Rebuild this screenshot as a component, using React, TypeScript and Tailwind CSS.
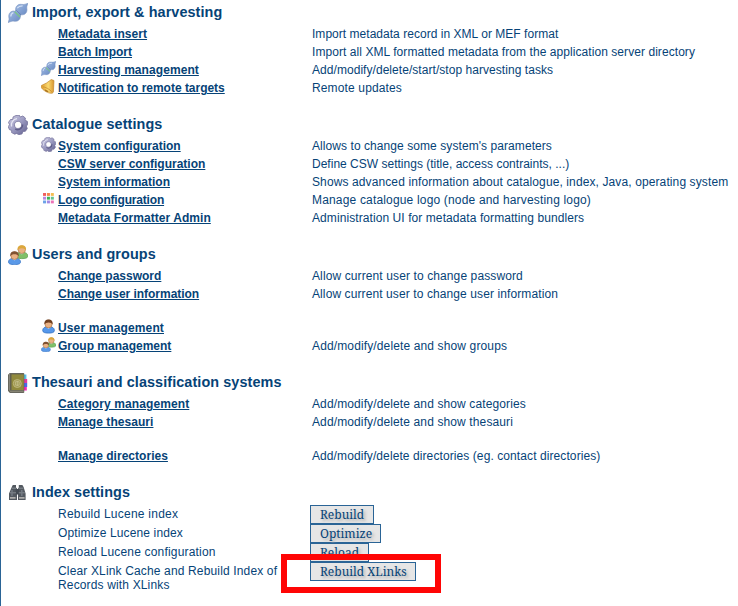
import React from "react";

type IconName = "plug" | "bell" | "gear" | "grid" | "users" | "user" | "book" | "binoculars";

function Person({ hair, shirt, edge }: { hair: string; shirt: string; edge: string }) {
  return (
    <g>
      <path d="M0.5 11C0.5 8.5 2.7 7.2 6.5 7.2S12.5 8.5 12.5 11C12.5 13 10 13.6 6.5 13.6S.5 13 .5 11Z" fill={shirt} stroke={edge} strokeWidth=".8" />
      <path d="M4.6 8 6.5 9.6 8.4 8Z" fill="#c8dcf5" />
      <ellipse cx="6.5" cy="4.7" rx="3.7" ry="3.8" fill="#e9b184" stroke="#a8713f" strokeWidth=".6" />
      <path d="M2.3 5.2C1.8 2 3.6.2 6.5.2S11.2 2 10.7 5.2C9.8 3.9 8.6 3.2 6.5 3.2S3.2 3.9 2.3 5.2Z" fill={hair} />
    </g>
  );
}

function Icon({ name, size }: { name: IconName; size: number }) {
  const id = React.useId();
  const fill = `url(#${id})`;
  return (
    <svg width={size} height={size} viewBox="0 0 20 20" className="block shrink-0">
      {name === "plug" && (
        <g>
          <defs>
            <linearGradient id={id} x1="0" y1="0" x2="1" y2="1">
              <stop offset="0" stopColor="#b9cdec" />
              <stop offset=".5" stopColor="#84a2d3" />
              <stop offset="1" stopColor="#5b7cb6" />
            </linearGradient>
          </defs>
          <path d="M.2 19.6C.3 18 1.4 17.2 1 15.2.2 11.4 1.6 8.6 5.4 8L7 8.6 7.6 6.6C7.6 3 10.2.9 13.8 1.4 16.2 1.7 17.8 1.2 19.8.2 19.8 2 18.4 3 18.8 5.2 19.5 8.6 17.8 11.4 14.6 11.8L13 11.4 12.4 13.4C12.2 16.8 9.6 18.8 6.2 18.2 4 17.8 2.2 18.7.2 19.6Z" fill={fill} stroke="#7590c0" strokeWidth=".6" />
          <path d="M6.8 8.8 12 14" stroke="#7cc486" strokeWidth="1.4" />
          <path d="M8.2 7.2 13.2 12" stroke="#56749f" strokeWidth=".6" />
          <path d="M9.2 5.2Q11 2.8 14.6 2.9M2.8 13.4Q2.8 10.6 5.4 9.6" fill="none" stroke="#d2e0f5" strokeWidth="1.2" />
        </g>
      )}
      {name === "bell" && (
        <g>
          <defs>
            <linearGradient id={id}>
              <stop offset="0" stopColor="#dc9a2c" />
              <stop offset=".55" stopColor="#fad970" />
              <stop offset="1" stopColor="#d8942f" />
            </linearGradient>
          </defs>
          <path d="M13.6.8 17.3 2 17 7.8 16.6 17C15.6 20.2 11.5 19.4 6.6 16.8 2 14.2-.8 11.3.6 8.6L7.6 5.2 11.4 2.4Z" fill={fill} stroke="#c18529" strokeWidth=".9" />
          <path d="M2.4 10.4C5 10.4 12.6 14 14.2 17" fill="none" stroke="#c58a2c" strokeWidth="1" />
          <path d="M4.8 13.6C5.2 17 9.3 18.3 10.2 16.2Z" fill="#a86f1c" />
        </g>
      )}
      {name === "gear" && (
        <g>
          <defs>
            <linearGradient id={id} x1="0" y1="0" x2="1" y2="1">
              <stop offset="0" stopColor="#cfcee4" />
              <stop offset=".5" stopColor="#9c9bc2" />
              <stop offset="1" stopColor="#5e5d8b" />
            </linearGradient>
          </defs>
          <path fillRule="evenodd" d="M8 .5 11.3.2 12.3 2 14.8 1 17.4 3 17 5.2 19.3 6.3 19.8 9.5 18.3 11 19.3 13.5 17.4 16.3 15 16.4 14 18.9 10.5 19.7 8.8 18.4 6.7 19.2 3.6 17.6 3.7 15.4 1.4 14.6.2 11.5 1.6 9.8.5 7.4 2.5 4.5 4.7 4.5 5.1 1.9ZM8.8 6.5C6.8 7.2 6 9.2 6.7 11.2S9.4 14 11.4 13.2 14.1 10.5 13.4 8.6 10.7 5.9 8.8 6.5Z" fill={fill} stroke="#73719b" strokeWidth=".8" />
          <path d="M3.6 11.5C2.7 7.5 5 4.3 9 3.6" fill="none" stroke="#e6e6f4" strokeWidth="1.3" />
          <path d="M7.3 13.9C9.7 16 14.6 13.9 14.7 9.5" fill="none" stroke="#5e5d89" strokeWidth="1.4" />
        </g>
      )}
      {name === "grid" && (
        <g>
          {["#f05c5c", "#f5834b", "#f6bd50", "#b886df", "#38b457", "#67c18c", "#6ca3e8", "#a389e4", "#ed72b7"].map((color, i) => (
            <rect key={i} x={2.7 + (i % 3) * 5.2} y={2.7 + Math.floor(i / 3) * 5} width="4" height="3.8" fill={color} />
          ))}
        </g>
      )}
      {name === "users" && (
        <g>
          <g transform="translate(7.3 0)"><Person hair="#dca83c" shirt="#80bf69" edge="#5a9f50" /></g>
          <g transform="translate(0 6)"><Person hair="#805232" shirt="#5a99e8" edge="#3a77c8" /></g>
        </g>
      )}
      {name === "user" && (
        <g transform="translate(1.6 .3) scale(1.3 1.36)"><Person hair="#714020" shirt="#5698eb" edge="#3472c2" /></g>
      )}
      {name === "book" && (
        <g>
          <path d="M15 1.5H18.4V6H15Z" fill="#55bce6" />
          <path d="M15 6H19.2V10H15Z" fill="#e03c9e" />
          <path d="M15 10H19.2V14H15Z" fill="#4b68e5" />
          <path d="M15 14H18.8V17.5H15Z" fill="#f22ab4" />
          <path d="M1.8.5H15.8V19.5H2L.4 18V1.8Z" fill="#626050" stroke="#56544a" strokeWidth=".8" />
          <path d="M3.5 1.4H15.8V17H3.5Z" fill="#918a3d" />
          <path d="M1.5 1V17.7" stroke="#85847a" strokeWidth="1" />
          <path d="M2 18.2H15.5" stroke="#a5a392" strokeWidth=".8" />
          <circle cx="9.3" cy="10.5" r="4" fill="#a29b55" stroke="#c2bb80" strokeWidth=".9" />
          <path d="M7.6 8.7h3.5v3.5H7.6ZM9.3 7.8V13" fill="none" stroke="#cbc595" strokeWidth=".7" />
        </g>
      )}
      {name === "binoculars" && (
        <g>
          <path d="M4 3.5 4.8 2H8V4.5L9 5.5V17H1V10.5ZM10.8 2H14.4L15.6 4 17.6 10.5V17H10V5.5L10.8 4.5Z" fill="#535960" />
          <path d="M7.7 6H11.2V11.5H7.7Z" fill="#454c54" />
          <path d="M3.8 5.2H8M10.8 5.2H15.4M2 9.8H8M10.8 9.8H16.8" stroke="#858b91" strokeWidth="1" />
          <path d="M2 14.8H7.6M11 14.8H16.6" stroke="#aeadab" strokeWidth="1.8" />
          <path d="M4 7V13M13.8 7V13" stroke="#767d85" strokeWidth="1.4" />
        </g>
      )}
    </svg>
  );
}

interface Entry { label: string; text?: string; icon?: IconName; spaced?: boolean; labelTracking?: string; tracking?: string }
interface Group { title: string; icon: IconName; entries: Entry[] }

const groups: Group[] = [
  { title: "Import, export & harvesting", icon: "plug", entries: [
    { label: "Metadata insert", labelTracking: "tracking-[0.07px]", text: "Import metadata record in XML or MEF format", tracking: "tracking-[0.03px]" },
    { label: "Batch Import", text: "Import all XML formatted metadata from the application server directory", tracking: "tracking-[0.065px]" },
    { label: "Harvesting management", labelTracking: "tracking-[0.07px]", text: "Add/modify/delete/start/stop harvesting tasks", tracking: "tracking-[0.05px]", icon: "plug" },
    { label: "Notification to remote targets", labelTracking: "tracking-[-0.02px]", text: "Remote updates", tracking: "tracking-[0.14px]", icon: "bell" },
  ] },
  { title: "Catalogue settings", icon: "gear", entries: [
    { label: "System configuration", text: "Allows to change some system's parameters", tracking: "tracking-[0.07px]", icon: "gear" },
    { label: "CSW server configuration", text: "Define CSW settings (title, access contraints, ...)", tracking: "tracking-[0.01px]" },
    { label: "System information", text: "Shows advanced information about catalogue, index, Java, operating system", tracking: "tracking-[0.11px]" },
    { label: "Logo configuration", labelTracking: "tracking-[-0.18px]", text: "Manage catalogue logo (node and harvesting logo)", tracking: "tracking-[0.17px]", icon: "grid" },
    { label: "Metadata Formatter Admin", labelTracking: "tracking-[0.05px]", text: "Administration UI for metadata formatting bundlers", tracking: "tracking-[0.08px]" },
  ] },
  { title: "Users and groups", icon: "users", entries: [
    { label: "Change password", text: "Allow current user to change password", tracking: "tracking-[0.11px]" },
    { label: "Change user information", labelTracking: "tracking-[-0.04px]", text: "Allow current user to change user information", tracking: "tracking-[0.1px]" },
    { label: "User management", labelTracking: "tracking-[0.13px]", icon: "user", spaced: true },
    { label: "Group management", text: "Add/modify/delete and show groups", icon: "users", tracking: "tracking-[0.13px]" },
  ] },
  { title: "Thesauri and classification systems", icon: "book", entries: [
    { label: "Category management", labelTracking: "tracking-[0.1px]", text: "Add/modify/delete and show categories", tracking: "tracking-[0.12px]" },
    { label: "Manage thesauri", labelTracking: "tracking-[0.05px]", text: "Add/modify/delete and show thesauri", tracking: "tracking-[0.12px]" },
    { label: "Manage directories", labelTracking: "tracking-[0.03px]", text: "Add/modify/delete directories (eg. contact directories)", tracking: "tracking-[0.09px]", spaced: true },
  ] },
];

const actions = [
  { label: "Rebuild Lucene index", button: "Rebuild", width: "w-16", tracking: "tracking-[0.24px]" },
  { label: "Optimize Lucene index", button: "Optimize", width: "w-[71px]", tracking: "tracking-[0.14px]" },
  { label: "Reload Lucene configuration", button: "Reload", width: "w-[59px]", tracking: "tracking-[0.18px]" },
  { label: "Clear XLink Cache and Rebuild Index of Records with XLinks", button: "Rebuild XLinks", width: "w-[106px]", tracking: "tracking-[0.15px]" },
];

function Heading({ title, icon }: { title: string; icon: IconName }) {
  return (
    <h2 className="flex h-[26px] items-center gap-1 text-[14.4px] leading-[18px] font-bold tracking-[0.09px]">
      <div className="pt-0.5"><Icon name={icon} size={20} /></div>
      <span>{title}</span>
    </h2>
  );
}

export default function App() {
  return (
    <main className="relative h-[606px] w-[738px] overflow-hidden border-l border-[#2a6496] bg-white pl-[7px] font-['Liberation_Sans',Arial,sans-serif] text-xs text-[#064377]">
      <div className="-mt-px flex flex-col gap-3.5">
        {groups.map((group) => (
          <section key={group.title}>
            <Heading title={group.title} icon={group.icon} />
            {group.entries.map((entry) => (
              <div key={entry.label} className={`flex h-[18px] items-center whitespace-nowrap ${entry.spaced ? "mt-4" : ""}`}>
                <div className="-mt-[3px] ml-[33px] w-[17px] shrink-0">{entry.icon && <Icon name={entry.icon} size={15} />}</div>
                <div className="w-[254px] shrink-0"><a href="#" className={`font-bold underline ${entry.labelTracking ?? ""}`}>{entry.label}</a></div>
                <span className={entry.tracking}>{entry.text}</span>
              </div>
            ))}
          </section>
        ))}
        <section>
          <Heading title="Index settings" icon="binoculars" />
          {actions.map((action) => (
            <div key={action.button} className="flex h-[19px] items-start pl-[50px]">
              <span className={`w-[252px] shrink-0 pt-0.5 pr-7 leading-[14px] ${action.tracking}`}>{action.label}</span>
              <button className={`h-[19px] shrink-0 border border-[#2a6496] bg-[#e6e6e6] pl-[9px] text-left font-['Noto_Serif','Droid_Serif','DejaVu_Serif_Condensed','DejaVu_Serif',serif] text-xs leading-[17px] whitespace-nowrap [text-shadow:2px_2px_3px_#aaa] ${action.width}`}>
                {action.button}
              </button>
            </div>
          ))}
        </section>
      </div>
      <div className="absolute top-[554px] left-[280px] h-[39px] w-40 border-[6px] border-[#ff0505]" />
    </main>
  );
}
